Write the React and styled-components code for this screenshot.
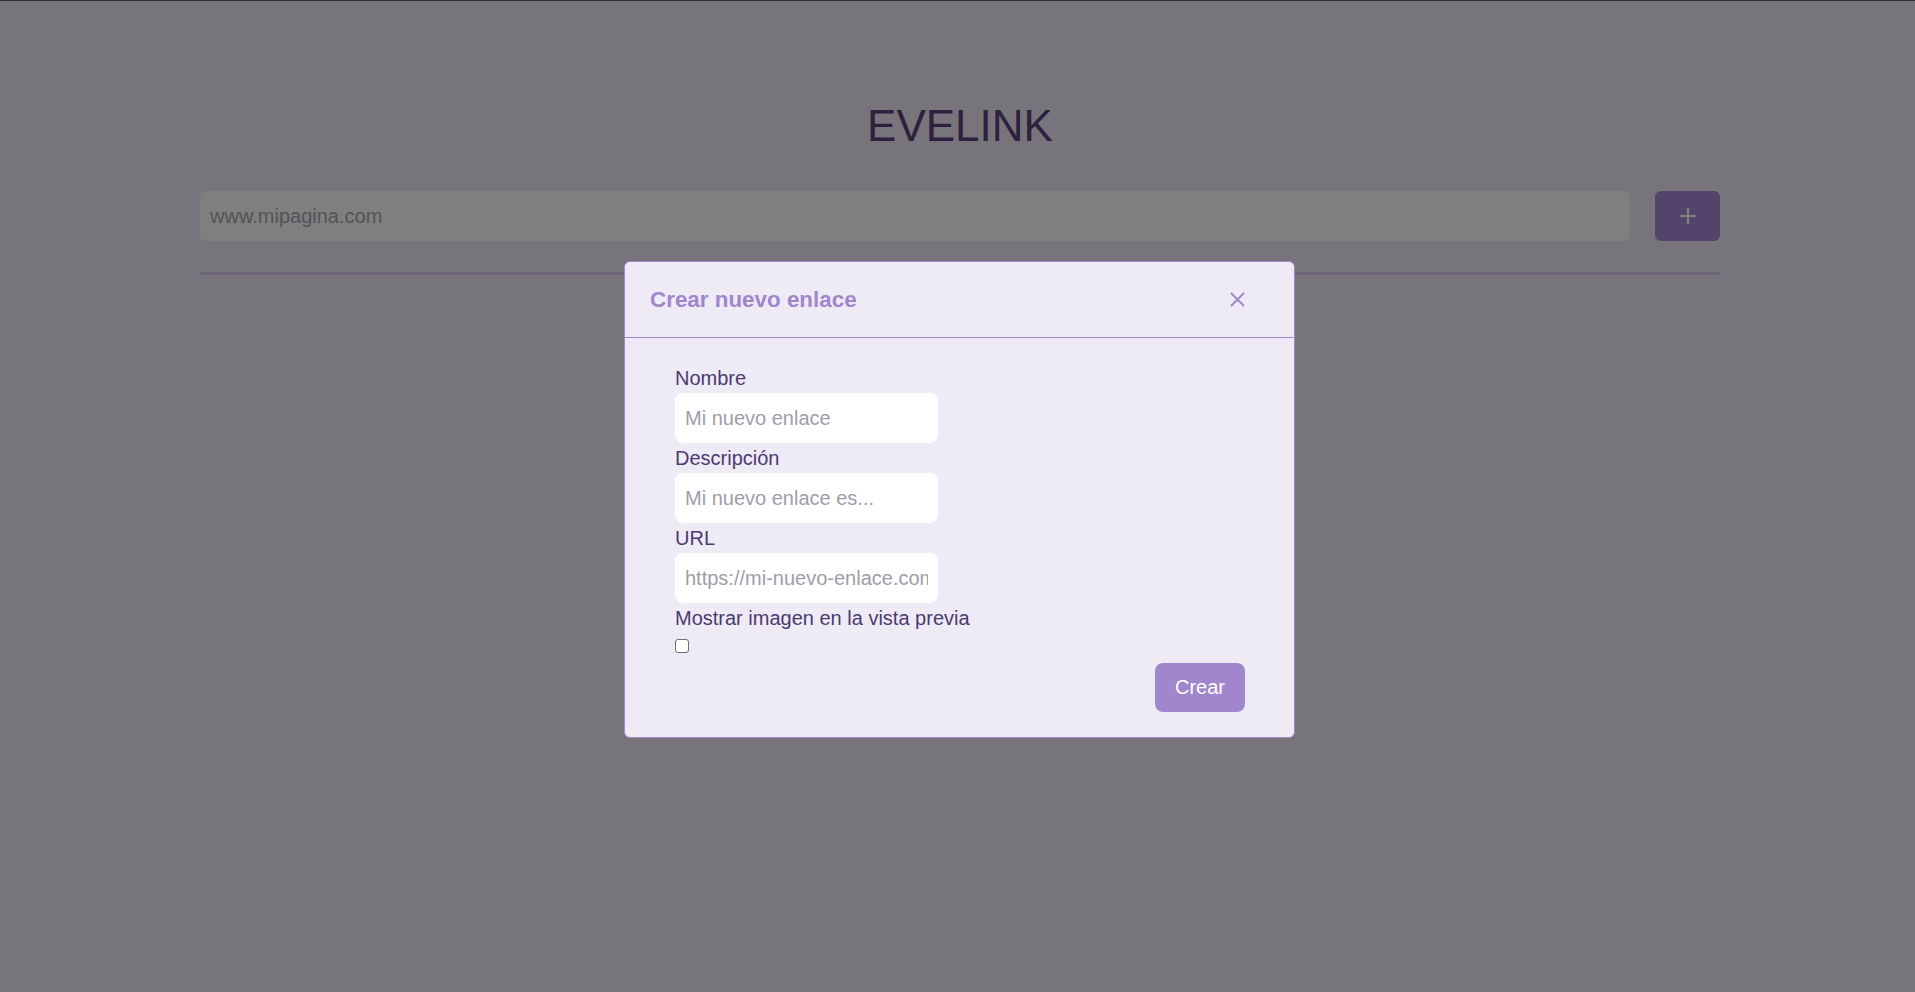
import styled, { createGlobalStyle } from 'styled-components';

const GlobalStyle = createGlobalStyle`
    * {
        box-sizing: border-box;
    }

    body {
        margin: 0;
        background-color: #EFEBF6;
        font-family: "Liberation Sans", Arial, sans-serif;
    }
`;

const Page = styled.main`
    width: 1520px;
    margin-left: 200px;
    padding-top: 101px;
`;

const Title = styled.h1`
    margin: 0;
    font-size: 44px;
    line-height: 49px;
    font-weight: 400;
    color: #5C427E;
    text-align: center;
`;

const SearchRow = styled.form`
    display: flex;
    gap: 25px;
    margin-top: 41px;
    height: 50px;
`;

const UrlInput = styled.input`
    flex: 1;
    height: 50px;
    border: none;
    border-radius: 6px;
    padding: 0 10px;
    background-color: #FFFFFF;
    font-family: inherit;
    font-size: 20px;
    outline: none;

    &::placeholder {
        color: #A8A7B2;
    }
`;

const AddButton = styled.button`
    width: 65px;
    height: 50px;
    border: none;
    border-radius: 6px;
    background-color: #A488D6;
    display: flex;
    align-items: center;
    justify-content: center;
    padding: 0;
`;

const Divider = styled.hr`
    margin: 31px 0 0;
    height: 3px;
    border: none;
    border-radius: 2px;
    background-color: #D6C8F2;
`;

const Overlay = styled.div`
    position: fixed;
    inset: 0;
    background-color: rgba(0, 0, 0, 0.5);
    box-shadow: inset 0 1px 0 #2E2D32;
    display: flex;
    justify-content: center;
    align-items: flex-start;
    padding: 261px 0 0 4px;
`;

const Modal = styled.div`
    width: 671px;
    background-color: #EFEBF6;
    border: 1px solid #A086CC;
    border-radius: 6px;
`;

const ModalHeader = styled.div`
    height: 76px;
    display: flex;
    align-items: center;
    justify-content: space-between;
    padding: 0 49px 0 25px;
    border-bottom: 1px solid #A086CC;
`;

const ModalTitle = styled.h5`
    margin: 0;
    font-size: 22.4px;
    font-weight: 700;
    color: #A086CC;
`;

const CloseButton = styled.button`
    width: 15px;
    height: 15px;
    padding: 0;
    border: none;
    background: none;
    display: flex;
`;

const ModalBody = styled.div`
    padding: 25px 49px 25px 50px;
`;

const FieldLabel = styled.label`
    display: block;
    font-size: 20px;
    line-height: 30px;
    color: #4B3A70;
`;

const TextInput = styled.input`
    display: block;
    width: 263px;
    height: 50px;
    border: none;
    border-radius: 8px;
    padding: 0 10px;
    background-color: #FFFFFF;
    font-family: inherit;
    font-size: 20px;
    outline: none;

    &::placeholder {
        color: #9E9EA9;
    }
`;

const Checkbox = styled.input`
    appearance: none;
    display: block;
    width: 14px;
    height: 14px;
    margin: 6px 0 0;
    border: 1px solid #6E6E6E;
    border-radius: 3px;
    background-color: #FFFFFF;
`;

const Footer = styled.div`
    display: flex;
    justify-content: flex-end;
    margin-top: 10px;
`;

const SubmitButton = styled.button`
    width: 90px;
    height: 49px;
    border: none;
    border-radius: 8px;
    background-color: #A086CC;
    color: #FFFFFF;
    font-family: inherit;
    font-size: 20px;
`;

const PlusIcon = () => (
    <svg width="18" height="18" viewBox="0 0 18 18">
        <path d="M9 1v16M1 9h16" stroke="#FFFFFF" strokeWidth="2" fill="none" />
    </svg>
);

const CloseIcon = () => (
    <svg width="15" height="15" viewBox="0 0 15 15">
        <path d="M1 1l13 13M14 1L1 14" stroke="#A086CC" strokeWidth="1.9" fill="none" />
    </svg>
);

const fields = [
    { id: 'nombre', label: 'Nombre', placeholder: 'Mi nuevo enlace' },
    { id: 'descripcion', label: 'Descripción', placeholder: 'Mi nuevo enlace es...' },
    { id: 'url', label: 'URL', placeholder: 'https://mi-nuevo-enlace.com' },
];

export default function App() {
    return (
        <>
            <GlobalStyle />
            <Page>
                <Title>EVELINK</Title>
                <SearchRow onSubmit={(e) => e.preventDefault()}>
                    <UrlInput placeholder="www.mipagina.com" />
                    <AddButton type="button"><PlusIcon /></AddButton>
                </SearchRow>
                <Divider />
            </Page>
            <Overlay>
                <Modal>
                    <ModalHeader>
                        <ModalTitle>Crear nuevo enlace</ModalTitle>
                        <CloseButton type="button"><CloseIcon /></CloseButton>
                    </ModalHeader>
                    <ModalBody>
                        {fields.map((f) => (
                            <div key={f.id}>
                                <FieldLabel htmlFor={f.id}>{f.label}</FieldLabel>
                                <TextInput id={f.id} placeholder={f.placeholder} />
                            </div>
                        ))}
                        <FieldLabel htmlFor="preview">Mostrar imagen en la vista previa</FieldLabel>
                        <Checkbox id="preview" type="checkbox" />
                        <Footer>
                            <SubmitButton type="button">Crear</SubmitButton>
                        </Footer>
                    </ModalBody>
                </Modal>
            </Overlay>
        </>
    );
}
